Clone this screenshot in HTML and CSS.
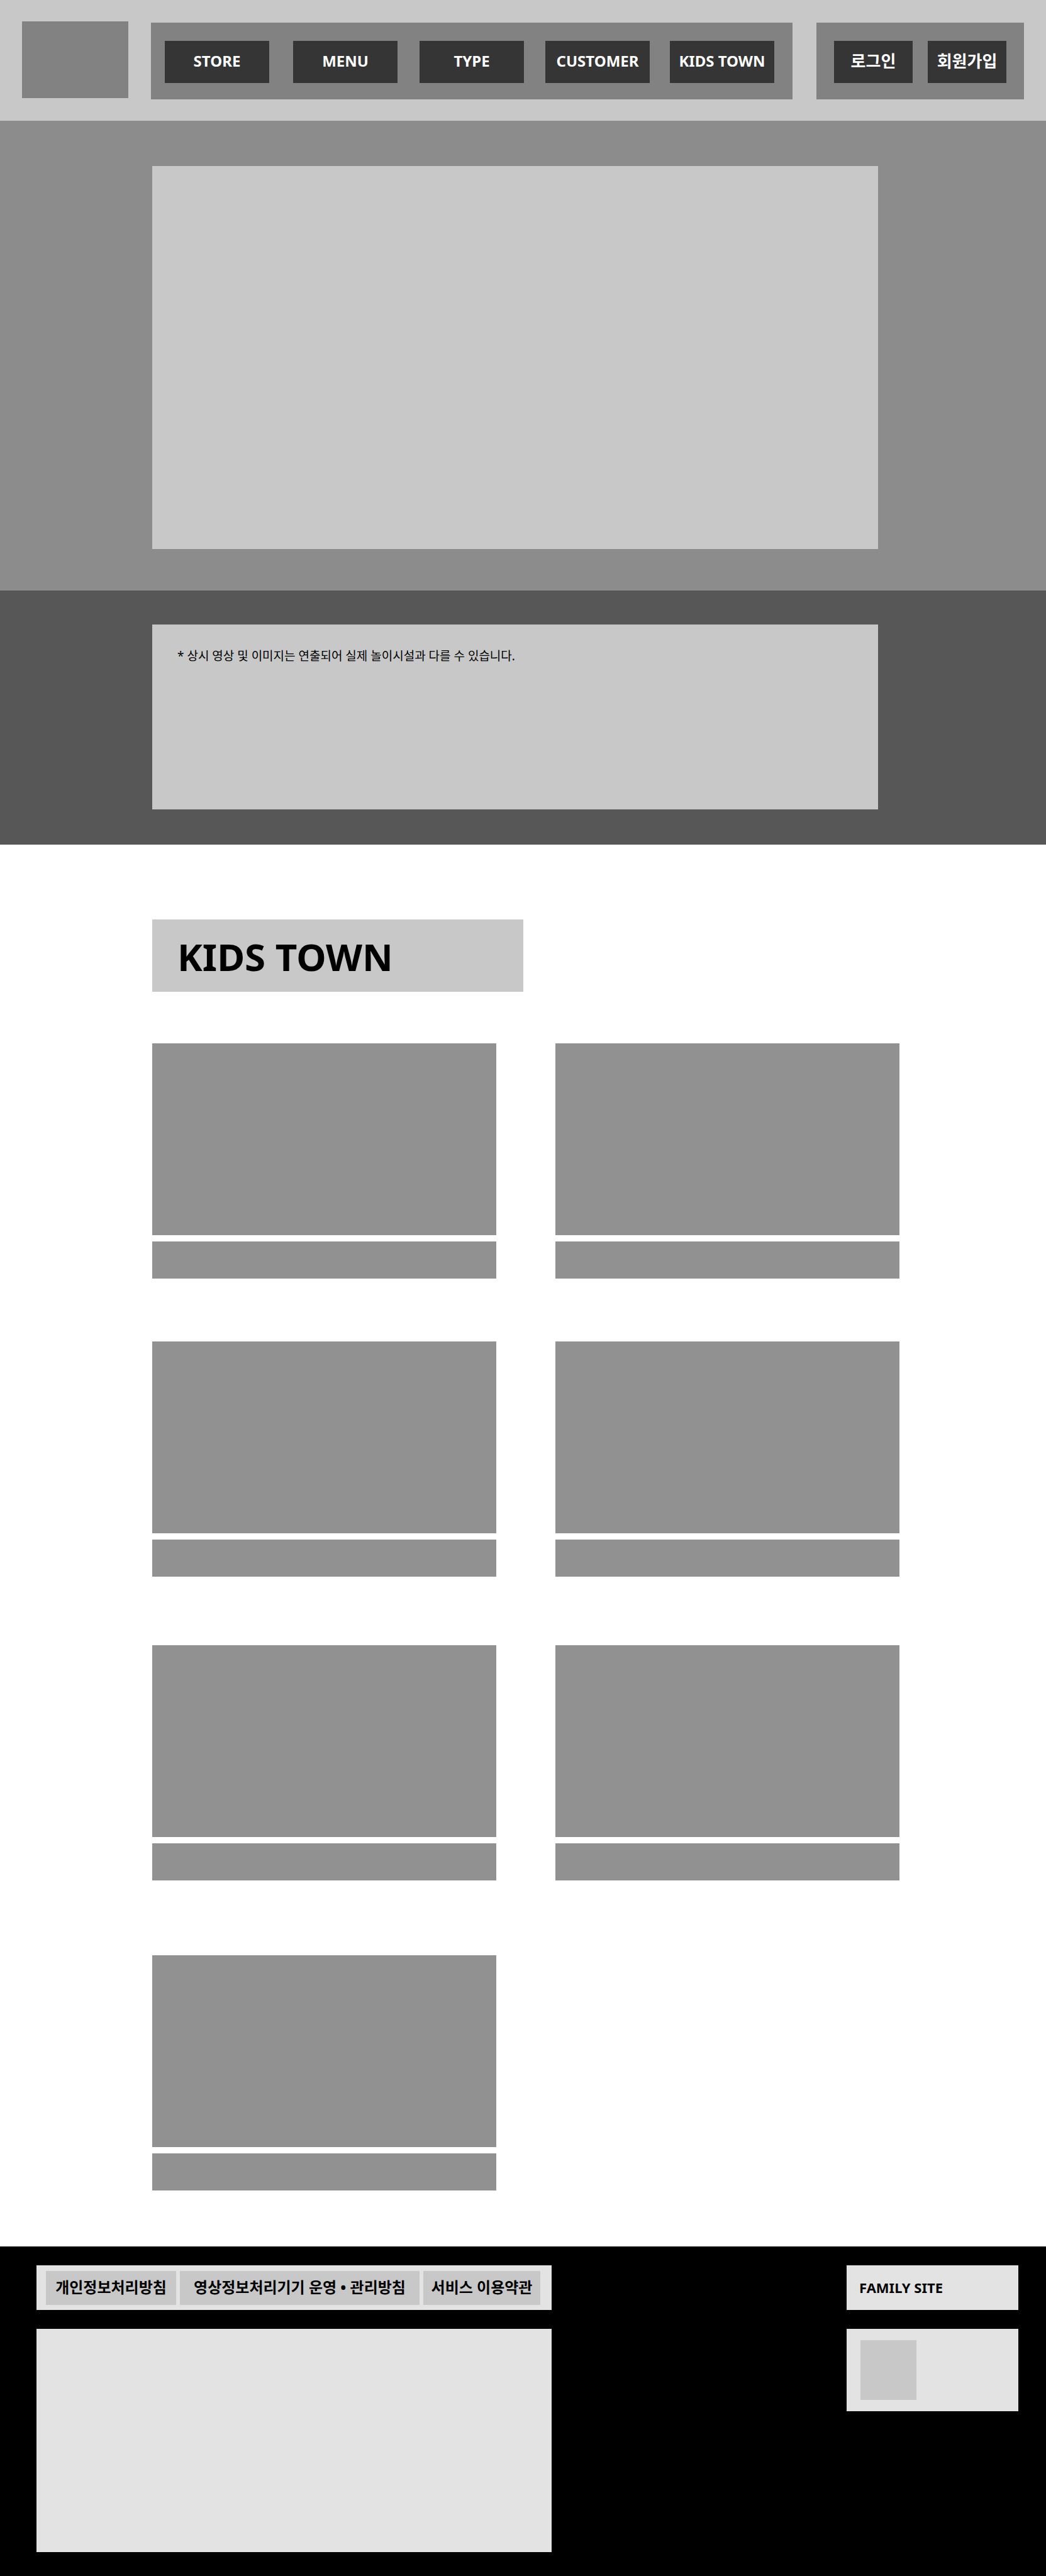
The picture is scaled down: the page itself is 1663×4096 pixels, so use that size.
FILE: index.html
```html
<!DOCTYPE html>
<html lang="ko">
<head>
<meta charset="utf-8">
<meta name="viewport" content="width=device-width, initial-scale=1">
<title>KIDS TOWN</title>
<link rel="stylesheet" href="styles.css">
</head>
<body>
<header class="header">
  <a class="logo" href="#" aria-label="Home"></a>
  <nav class="panel main-nav">
    <a class="nav-link" href="#">STORE</a>
    <a class="nav-link" href="#">MENU</a>
    <a class="nav-link" href="#">TYPE</a>
    <a class="nav-link" href="#">CUSTOMER</a>
    <a class="nav-link" href="#">KIDS TOWN</a>
  </nav>
  <div class="panel account">
    <a class="nav-link" href="#">로그인</a>
    <a class="nav-link" href="#">회원가입</a>
  </div>
</header>

<main>
  <section class="hero">
    <div class="hero-media"></div>
  </section>

  <section class="notice">
    <p class="notice-box">* 상시 영상 및 이미지는 연출되어 실제 놀이시설과 다를 수 있습니다.</p>
  </section>

  <section class="town">
    <h1 class="town-title">KIDS TOWN</h1>
    <div class="cards">
      <article class="card"><div class="card-image"></div><div class="card-caption"></div></article>
      <article class="card"><div class="card-image"></div><div class="card-caption"></div></article>
      <article class="card"><div class="card-image"></div><div class="card-caption"></div></article>
      <article class="card"><div class="card-image"></div><div class="card-caption"></div></article>
      <article class="card"><div class="card-image"></div><div class="card-caption"></div></article>
      <article class="card"><div class="card-image"></div><div class="card-caption"></div></article>
      <article class="card"><div class="card-image"></div><div class="card-caption"></div></article>
    </div>
  </section>
</main>

<footer class="footer">
  <div class="footer-main">
    <nav class="policies">
      <a class="policy privacy" href="#">개인정보처리방침</a>
      <a class="policy video" href="#">영상정보처리기기 운영 • 관리방침</a>
      <a class="policy terms" href="#">서비스 이용약관</a>
    </nav>
    <div class="company"></div>
  </div>
  <div class="footer-side">
    <button class="family" type="button">FAMILY SITE</button>
    <div class="social"><div class="social-icon"></div></div>
  </div>
</footer>
</body>
</html>
```

FILE: styles.css
```css
* {
  box-sizing: border-box;
}

body {
  margin: 0;
  background: #fff;
  color: #000;
  font-family: "Noto Sans", "Noto Sans CJK KR", sans-serif;
}

a {
  color: inherit;
  text-decoration: none;
}

/* Header */
.header {
  display: flex;
  align-items: flex-end;
  padding: 34px 35px;
  background: #c8c8c8;
}

.logo {
  align-self: flex-start;
  width: 169px;
  height: 122px;
  margin-right: 36px;
  margin-bottom: 2px;
  background: #828282;
}

.panel {
  padding: 29px 28px 26px;
  background: #828282;
}

.main-nav {
  flex: 1;
  display: grid;
  grid-template-columns: 204fr 201fr 200fr 198fr 166px;
  padding-left: 22px;
  padding-right: 29px;
  margin-right: 38px;
}

.account {
  display: grid;
  grid-template-columns: 125px 125px;
  gap: 24px;
}

.nav-link {
  display: flex;
  align-items: center;
  justify-content: center;
  max-width: 166px;
  height: 67px;
  padding-bottom: 3px;
  background: #353535;
  color: #fff;
  font-size: 24px;
  line-height: 32px;
  font-weight: 700;
  white-space: nowrap;
}

.account .nav-link {
  font-size: 26px;
}

/* Hero and notice */
.hero {
  padding: 72px 267px 66px 242px;
  background: #8c8c8c;
}

.hero-media {
  height: 609px;
  background: #c8c8c8;
}

.notice {
  padding: 54px 267px 56px 242px;
  background: #575757;
}

.notice-box {
  min-height: 294px;
  margin: 0;
  padding: 36px 40px;
  background: #c8c8c8;
  font-size: 19px;
  line-height: 28px;
}

/* Card list */
.town {
  padding: 119px 233px 89px 242px;
}

.town-title {
  width: 590px;
  max-width: 100%;
  margin: 0 0 82px;
  padding: 17px 40px 14px;
  background: #c8c8c8;
  font-size: 60px;
  line-height: 84px;
  font-weight: 700;
}

.cards {
  display: grid;
  grid-template-columns: 1fr 1fr;
  grid-template-rows: 474px 483px 493px auto;
  column-gap: 94px;
  align-items: start;
}

.card {
  display: grid;
  gap: 10px;
}

.card-image {
  height: 305px;
  background: #919191;
}

.card-caption {
  height: 59px;
  background: #919191;
}

/* Footer */
.footer {
  display: flex;
  justify-content: space-between;
  padding: 30px 44px 38px 58px;
  background: #000;
}

.footer-main,
.footer-side {
  display: flex;
  flex-direction: column;
  gap: 30px;
}

.footer-main {
  width: 819px;
}

.footer-side {
  width: 273px;
}

.policies {
  display: flex;
  gap: 6px;
  height: 71px;
  padding: 9px 18px 8px 15px;
  background: #e3e3e3;
}

.policy {
  display: flex;
  align-items: center;
  justify-content: center;
  padding-bottom: 2px;
  background: #c8c8c8;
  font-size: 24px;
  line-height: 32px;
  font-weight: 700;
  white-space: nowrap;
}

.privacy {
  width: 207px;
}

.video {
  flex: 1;
}

.terms {
  width: 186px;
}

.company {
  height: 355px;
  background: #e3e3e3;
}

.family {
  height: 71px;
  padding: 0 20px 2px;
  border: 0;
  background: #e3e3e3;
  color: #000;
  font: 700 22px/32px "Noto Sans", "Noto Sans CJK KR", sans-serif;
  text-align: left;
}

.social {
  padding: 18px 22px;
  background: #e3e3e3;
}

.social-icon {
  width: 89px;
  height: 95px;
  background: #c8c8c8;
}
```
